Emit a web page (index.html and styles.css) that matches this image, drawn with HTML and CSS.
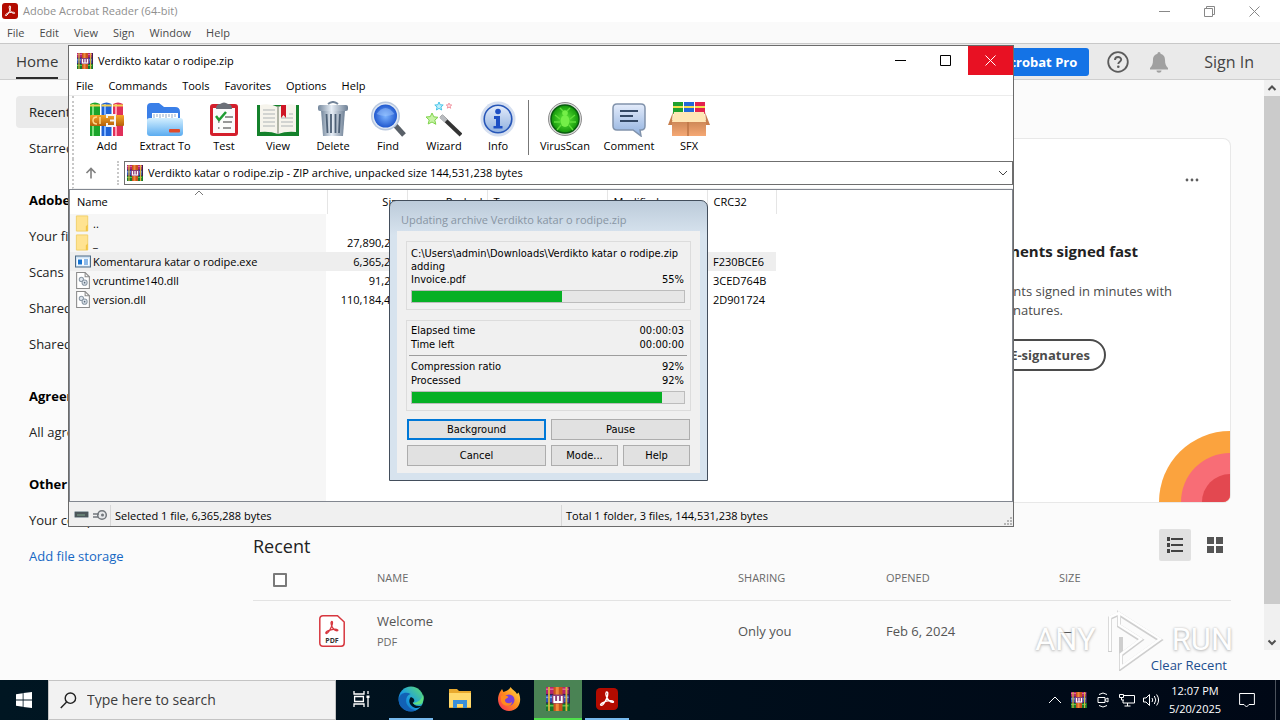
FILE: index.html
```html
<!DOCTYPE html>
<html lang="en">
<head>
<meta charset="utf-8">
<title>Adobe Acrobat Reader (64-bit)</title>
<link rel="stylesheet" href="styles.css">
</head>
<body>
<svg class="defs" aria-hidden="true">
  <symbol id="rar" viewBox="0 0 16 16" stroke="none">
    <rect width="16" height="16" fill="#3b1f4d"/>
    <rect x="0" y="0" width="15" height="4.6" fill="#b3256f"/><rect x="0" y="1" width="15" height="1" fill="#e0669b"/>
    <rect x="0" y="5.4" width="15" height="4.8" fill="#2e55b5"/><rect x="0" y="6.4" width="15" height="1" fill="#7f9fe8"/>
    <rect x="0" y="11" width="16" height="5" fill="#157a2c"/><rect x="0" y="12" width="15" height="1" fill="#58c04e"/>
    <rect x="1.4" y="0" width="1.2" height="16" fill="#d9b23c"/><rect x="13" y="0" width="1.2" height="16" fill="#d9b23c"/>
    <rect x="5" y="0" width="6" height="16" fill="#c9541c"/><rect x="6.5" y="0" width="2" height="16" fill="#f08a3c"/>
    <rect x="4" y="5" width="8" height="6" rx="1" fill="#8c3f78"/>
    <path d="M5.5 6v4h5V6M8 6v4" fill="none" stroke="#fff" stroke-width="1.2"/>
  </symbol>
  <symbol id="acro" viewBox="0 0 24 24">
    <rect width="24" height="24" rx="4.5" fill="#b30b00"/>
    <path d="M11.2 4.5c2.4-1.2 1.8 3.400.7 6.200C10.500 14 8 18.800 6 19c-2.200 0-.6-2.400 2.600-3.700 3.400-1.500 9-2.200 10.300-.7 1 1.600-2.300 1.500-4.500-.6-2.800-2.700-4.600-7.800-3.200-9.500z" fill="none" stroke="#fff" stroke-width="1.500"/>
  </symbol>
  <symbol id="folder" viewBox="0 0 16 18">
    <path d="M1 1h12v16H1z" fill="#ffe391"/><path d="M1 1h12v16H1z" fill="none" stroke="#f0cf69"/><path d="M11 12l2-2v7h-2z" fill="#f2c544"/>
  </symbol>
  <symbol id="dll" viewBox="0 0 14 16">
    <path d="M1 .5h8l4 4v11H1z" fill="#fff" stroke="#8b8b8b"/><path d="M9 .5v4h4" fill="none" stroke="#8b8b8b"/>
    <circle cx="5.500" cy="7" r="2" fill="#dfe6ee" stroke="#8d9aa7"/><circle cx="8.500" cy="10" r="2.400" fill="#dfe6ee" stroke="#8d9aa7"/><circle cx="8.500" cy="10" r=".8" fill="#5c6c7c"/>
  </symbol>
  <linearGradient id="gGlass" x1="0" y1="0" x2="0" y2="1"><stop offset="0" stop-color="#e4ecfb"/><stop offset="1" stop-color="#8fb0de"/></linearGradient>
  <linearGradient id="gFold" x1="0" y1="0" x2="0" y2="1"><stop offset="0" stop-color="#d3efff"/><stop offset="1" stop-color="#5bacf0"/></linearGradient>
  <linearGradient id="gMetal" x1="0" y1="0" x2="1" y2="0"><stop offset="0" stop-color="#74879c"/><stop offset=".45" stop-color="#e7eef6"/><stop offset="1" stop-color="#6d7f94"/></linearGradient>
  <linearGradient id="gGold" x1="0" y1="0" x2="0" y2="1"><stop offset="0" stop-color="#f6a62a"/><stop offset="1" stop-color="#b55f09"/></linearGradient>
  <linearGradient id="gBox" x1="0" y1="0" x2="0" y2="1"><stop offset="0" stop-color="#c98454"/><stop offset="1" stop-color="#f5a874"/></linearGradient>
  <radialGradient id="gLens"><stop offset="0" stop-color="#7db4ff"/><stop offset="1" stop-color="#2159cf"/></radialGradient>
  <radialGradient id="gVirus"><stop offset="0" stop-color="#64ee3c"/><stop offset="1" stop-color="#129509"/></radialGradient>
  <linearGradient id="gEdge" x1="0" y1="1" x2="1" y2="0"><stop offset="0" stop-color="#0c59a4"/><stop offset=".45" stop-color="#1b9de2"/><stop offset="1" stop-color="#62e06a"/></linearGradient>
  <linearGradient id="gFox" x1="1" y1="0" x2="0" y2="1"><stop offset="0" stop-color="#ffe14a"/><stop offset=".5" stop-color="#ff8a1e"/><stop offset="1" stop-color="#f5245f"/></linearGradient>
</svg>

<div class="desktop">
  <div class="acrobat">
    <header class="titlebar">
      <svg class="app-icon"><use href="#acro"/></svg>
      <span class="title">Adobe Acrobat Reader (64-bit)</span>
      <div class="win-buttons">
        <button aria-label="Minimize"><svg viewBox="0 0 11 11"><path d="M0 5.500h11" /></svg></button>
        <button aria-label="Restore"><svg viewBox="0 0 11 11"><path d="M.5 2.500h8v8h-8zM2.500 2.500v-2h8v8h-2"/></svg></button>
        <button aria-label="Close"><svg viewBox="0 0 11 11"><path d="M.5.5l10 10M10.500.5l-10 10"/></svg></button>
      </div>
    </header>
    <nav class="menubar">
      <button>File</button><button>Edit</button><button>View</button><button>Sign</button><button>Window</button><button>Help</button>
    </nav>
    <div class="toolbar">
      <button class="tab">Home</button>
      <div class="toolbar-right">
        <button class="try">Try Acrobat Pro</button>
        <button class="icon-btn" aria-label="Help"><svg class="i22" viewBox="0 0 22 22"><circle cx="11" cy="11" r="9.800" fill="none" stroke="#5c5c5c" stroke-width="1.800"/><path d="M8 9c0-4 6.200-3.800 6.200-.4 0 2.200-2.900 2.200-2.900 4.400" fill="none" stroke="#5c5c5c" stroke-width="1.900"/><circle cx="11.300" cy="15.800" r="1.300" fill="#5c5c5c"/></svg></button>
        <button class="icon-btn" aria-label="Notifications"><svg class="i20" viewBox="0 0 20 22"><path d="M10 1c1 0 1.500.8 1.500 1.700C15 3.600 16 6.300 16 9c0 4.200 1 6 3 8v1.500H1V17c2-2 3-3.800 3-8 0-2.700 1-5.400 4.500-6.300C8.500 1.800 9 1 10 1zM7.500 19.500h5c0 3-5 3-5 0z" fill="#a0a0a0"/></svg></button>
        <button class="signin">Sign In</button>
      </div>
    </div>
    <div class="body">
      <nav class="side">
        <a href="#" class="on">Recent</a><a href="#">Starred</a>
        <h3>Adobe cloud storage</h3>
        <a href="#">Your files</a><a href="#">Scans</a><a href="#">Shared by you</a><a href="#">Shared by others</a>
        <h3>Agreements</h3>
        <a href="#">All agreements</a>
        <h3>Other file storage</h3>
        <a href="#">Your computer</a><a href="#" class="link">Add file storage</a>
      </nav>
      <div class="pane">
        <div class="scroller">
          <main class="content">
            <section class="card">
              <button class="more" aria-label="More"><svg viewBox="0 0 20 20" fill="#5f5f5f"><circle cx="5" cy="10" r="1.400"/><circle cx="10" cy="10" r="1.400"/><circle cx="15" cy="10" r="1.400"/></svg></button>
              <h2>Get documents signed fast</h2>
              <p class="l1">Get your documents signed in minutes with</p>
              <p class="l2">secure e-signatures.</p>
              <button class="esign">Request E-signatures</button>
              <svg class="arc" viewBox="0 0 71 71"><circle cx="71" cy="71" r="71" fill="#fba33e"/><circle cx="71" cy="71" r="49" fill="#f86d76"/><circle cx="71" cy="71" r="28" fill="#e34850"/></svg>
            </section>
            <div class="recent-head">
              <h2>Recent</h2>
              <button class="view on" aria-label="List view"><svg viewBox="0 0 18 18" fill="#444"><path d="M1 1h3v4H1zM5 2h12v2H5zM1 7h3v4H1zM5 8h12v2H5zM1 13h3v4H1zM5 14h12v2H5z"/></svg></button>
              <button class="view" aria-label="Grid view"><svg viewBox="0 0 18 18" fill="#555"><path d="M1 1h7v7H1zM10 1h7v7h-7zM1 10h7v7H1zM10 10h7v7h-7z"/></svg></button>
            </div>
            <table class="recent">
              <colgroup><col class="c1"><col class="c2"><col class="c3"><col class="c4"><col class="c5"><col></colgroup>
              <thead><tr><th><input type="checkbox" aria-label="Select all"></th><th></th><th>NAME</th><th>SHARING</th><th>OPENED</th><th>SIZE</th></tr></thead>
              <tbody><tr><td></td>
                <td><svg class="pdf" viewBox="0 0 26 32"><path d="M4 .8h14.500l6.700 6.200v21q0 3.200-3 3.200H4q-3.200 0-3.200-3.200V4Q.8.8 4 .8z" fill="#fff" stroke="#d7373f" stroke-width="1.500"/><path d="M12.500 6.500c1.600-.7 1 3-.1 5.300-1.300 3-3.400 6.500-5 6.700-1.500-.4 0-2 2-2.800 3-1.200 7.700-2 9.300-.7.800 1-1.700 1.400-3.700-.5-2.300-2.200-3.800-6.800-2.500-8z" fill="none" stroke="#d7373f" stroke-width="1.300"/><text x="13" y="27.500" text-anchor="middle">PDF</text></svg></td>
                <td><div class="doc">Welcome</div><div class="kind">PDF</div></td><td>Only you</td><td>Feb 6, 2024</td><td>—</td></tr></tbody>
            </table>
          </main>
          <div class="scrollbar">
            <button aria-label="Scroll up"><svg viewBox="0 0 16 16"><path d="M4.500 10L8 6.500l3.500 3.500"/></svg></button>
            <div class="thumb"></div>
            <button aria-label="Scroll down"><svg viewBox="0 0 16 16"><path d="M4.500 6.500L8 10l3.500-3.500"/></svg></button>
          </div>
        </div>
        <footer class="foot"><a href="#">Clear Recent</a></footer>
      </div>
    </div>
  </div>

  <footer class="taskbar">
    <button class="start" aria-label="Start"><svg viewBox="0 0 16 16" fill="#fff"><path d="M0 2.200L6.700 1.200v6.400H0zM7.500 1.100L16 0v7.600H7.500zM0 8.400h6.700v6.400L0 13.800zM7.500 8.400H16V16l-8.500-1.100z"/></svg></button>
    <label class="search"><svg viewBox="0 0 18 18"><circle cx="11" cy="6.500" r="5.500"/><path d="M7 10.500L.8 17"/></svg><input type="text" placeholder="Type here to search" aria-label="Search"></label>
    <div class="tasks">
      <button class="task" aria-label="Task view"><svg class="i18" viewBox="0 0 18 18" fill="none" stroke="#fff" stroke-width="1.300"><path d="M1 1v3h10V1M1 17v-3h10v3M1.600 6.500h8.800v5H1.600zM15 1v3M15 8v9"/><path d="M13.500 5.500h3v2.500h-3z" fill="#fff" stroke="none"/></svg></button>
      <button class="task run" aria-label="Edge"><svg class="i26" viewBox="0 0 26 26"><circle cx="13" cy="13" r="12.500" fill="url(#gEdge)"/><path d="M.7 13C2 7 8 5.500 12.500 8c-4.500 1.500-6 8-2.500 12 2 2.500 5 4 8 4.200C9 28 .2 22 .7 13z" fill="#1261b5"/><path d="M13 11c-3 2.500-2 8.500 3 10.500 3 1.200 6.500.2 8-2-5 1.700-8.500-.5-9-3 2-1 2-4-2-5.500z" fill="#001622"/><path d="M14.500 16.800c1.500 2.200 5.500 2.700 9.500.7 2-4 2-7 1-9-1 5.500-6 8.500-10.500 8.300z" fill="#5cdf83"/></svg></button>
      <button class="task" aria-label="File Explorer"><svg class="i22" viewBox="0 0 22 20"><path d="M0 0h8l2 2h12v17H0z" fill="#e8a92e"/><path d="M0 4h22v14H0z" fill="#ffd96c"/><path d="M4 19v-8h14v8h-4v-4H8v4z" fill="#3b8fd8"/></svg></button>
      <button class="task" aria-label="Firefox"><svg class="i24" viewBox="0 0 24 24"><path d="M3 5l2-3 1.500 3L9 4c2-1 3.500-1.500 4.500-4 2 3 5 4 6.500 7l1.500-1.500C26 15 21 24 12 24 3 24-2 14 3 5z" fill="url(#gFox)"/><circle cx="12" cy="13" r="5.500" fill="#7a3fd6"/><path d="M4 9c3-1.500 5-.5 7 .5 1 2-3 1.500-3 4s4 4 7 1.500c0 5-9 5.500-11-1z" fill="#ff8a1e"/></svg></button>
      <button class="task active" aria-label="WinRAR"><svg class="i24"><use href="#rar"/></svg></button>
      <button class="task run" aria-label="Acrobat"><svg class="i22"><use href="#acro"/></svg></button>
    </div>
    <div class="tray">
      <button aria-label="Show hidden icons"><svg class="i16" viewBox="0 0 16 16"><path d="M2 11l6-6 6 6"/></svg></button>
      <button aria-label="WinRAR"><svg class="i16"><use href="#rar"/></svg></button>
      <button aria-label="Meet now"><svg class="i16" viewBox="0 0 16 16"><path d="M3 5.500h7v5H3zM10 7.500l3-1.500v4l-3-1.500M4 2.500q4-3 8 0M4 13.500q4 3 8 0"/></svg></button>
      <button aria-label="Network"><svg class="i16" viewBox="0 0 16 16"><path d="M5 3.500h10.500v7.500H4V8M8.500 11v3M5.500 14h6M.5 2.500h4v3h-4zM2.500 5.500V8H5"/></svg></button>
      <button aria-label="Volume"><svg class="i16" viewBox="0 0 16 16"><path d="M.5 6h2.500l3.500-3.500v11L3 10H.5zM9 6q1.500 2 0 4M11.300 4q3 4 0 8M13.600 2.500q4 5.500 0 11"/></svg></button>
      <time class="clock"><span>12:07 PM</span><span>5/20/2025</span></time>
      <button class="notif" aria-label="Notifications"><svg class="i16" viewBox="0 0 16 16"><path d="M.6 1.500h14.800v11H10L7.500 15 5 12.500H.6z"/></svg></button>
    </div>
  </footer>

  <div class="watermark" aria-hidden="true"><span>ANY</span><svg viewBox="0 0 60 62"><path d="M15 5l41 26-39 28V46l20-15L15 17zM15 5L6 9v34M17 46V28" fill="none" stroke="#c4c4c4" stroke-width="4"/><path d="M15 4l41 26-39 28V45l20-15L15 16zM15 4L6 8v34" fill="none" stroke="#fff" stroke-width="2.500"/></svg><span>RUN</span></div>

  <section class="winrar">
    <header class="wr-title">
      <svg class="i16"><use href="#rar"/></svg><h1>Verdikto katar o rodipe.zip</h1>
      <div class="win-buttons">
        <button aria-label="Minimize"><svg viewBox="0 0 11 11"><path d="M0 5.500h11"/></svg></button>
        <button aria-label="Maximize"><svg viewBox="0 0 11 11"><path d="M.5.5h10v10H.5z"/></svg></button>
        <button class="close" aria-label="Close"><svg viewBox="0 0 11 11"><path d="M.5.5l10 10M10.500.5l-10 10"/></svg></button>
      </div>
    </header>
    <nav class="wr-menu"><button>File</button><button>Commands</button><button>Tools</button><button>Favorites</button><button>Options</button><button>Help</button></nav>
    <div class="wr-tools">
      <button class="w52"><svg viewBox="0 0 36 36"><path d="M1 3q5-3 10 0v32H1z" fill="#1ba52c"/><path d="M12.500 3q5-3 10 0v32h-10z" fill="#1f62d6"/><path d="M24 3q5-3 10 0v32H24z" fill="#e0305a"/><path d="M3 3h2v32H3z" fill="#7fe07e"/><path d="M15 3h2v32h-2z" fill="#7db2ff"/><path d="M26 3h2v32h-2z" fill="#ff9ab4"/><path d="M1 3.500h10v2H1zM12.500 3.500h10v2h-10zM24 3.500h10v2H24z" fill="#f4d04e"/><rect x="1" y="14" width="34" height="11" rx="1" fill="url(#gGold)"/><path d="M8 16q-4 0-4 3.500T8 23M11 16v7" fill="none" stroke="#ffd98a" stroke-width="1.500"/><path d="M18 17v-3h8v11h-8v-3M21 19.500h6" fill="none" stroke="#f4f4f4" stroke-width="2"/></svg>Add</button>
      <button class="w64"><svg viewBox="0 0 36 36"><path d="M0 6q0-4 4-4h8l5 4h11q5 0 5 5v18H0z" fill="#3a7fe8"/><path d="M5 12h26v8H5z" fill="#fff"/><path d="M7 13v4M10 13v3M13 13v4M16 13v3M19 13v4M22 13v3M25 13v4M28 13v3" stroke="#8fa9c9"/><path d="M0 19q0-2 3-2h30q3 0 3 3v12q0 3-3 3H3q-3 0-3-3z" fill="url(#gFold)"/><rect x="22" y="28" width="11" height="3.500" rx="1" fill="#e04a2a"/></svg>Extract To</button>
      <button class="w54"><svg viewBox="0 0 36 36"><rect x="4" y="3" width="28" height="32" rx="3" fill="#d41f2c"/><path d="M7 7h22v25H7z" fill="#fbfbfb"/><path d="M10 8q0-5 4-5 4-3 8 0 4 0 4 5z" fill="#6c7078"/><path d="M10 15l3 4 7-8" fill="none" stroke="#1f9c33" stroke-width="2.500"/><path d="M19 16h8M12 21h1.500M17 21h9M12 27h1.500M17 27h8" stroke="#777" stroke-width="1.500"/></svg>Test</button>
      <button class="w54"><svg class="wide" viewBox="0 0 42 36"><path d="M0 4h42v31H0z" fill="#14812b"/><path d="M3 4q10-2 18 2 8-4 18-2v27q-10-1-18 2-8-3-18-2z" fill="#f6f4ec"/><path d="M6 9h12M6 13h12M6 17h12M6 21h12M6 25h12M24 21h12M24 17h12M24 25h12M32 13h4" stroke="#aeb3b5" stroke-width="1.200"/><path d="M21 5v28" stroke="#9aa090" stroke-width="1.500"/><path d="M24 4h5v13l-2.500-3-2.500 3z" fill="#cf1626"/></svg>View</button>
      <button class="w56"><svg viewBox="0 0 36 36"><path d="M13 3q5-4 10 0" fill="none" stroke="#73859a" stroke-width="2"/><path d="M6 9h24l-2 26H8z" fill="url(#gMetal)"/><rect x="3" y="4" width="30" height="6" rx="2" fill="url(#gMetal)"/><path d="M11.500 13l1 19M16 13v19M20.500 13v19M25 13l-1 19" stroke="#4d6076" stroke-width="1.800"/></svg>Delete</button>
      <button class="w54"><svg viewBox="0 0 36 36"><path d="M25 24l9 10" stroke="#596068" stroke-width="5"/><circle cx="15.500" cy="15" r="14.500" fill="#b9c8de"/><circle cx="15.500" cy="15" r="13" fill="#dfe8f4"/><circle cx="15.500" cy="15" r="11.500" fill="url(#gLens)"/><path d="M6.500 13q9-12 18 0-9 4-18 0z" fill="#a6ccff" opacity=".45"/></svg>Find</button>
      <button class="w58"><svg viewBox="0 0 36 36"><path d="M15 15l20 19" stroke="#343434" stroke-width="4"/><path d="M15 15l5 5" stroke="#b9bcc0" stroke-width="4"/><path d="M6 12l1.800 3.800 4.200.5-3.200 2.800 1 4.200L6 21l-3.800 2 1-4L0 16l4.300-.4z" fill="#c7f3a5" stroke="#7fd34c"/><path d="M13 1l1.200 2.800 3 .2-2.300 2 .8 3-2.700-1.600L10.400 9l.7-3L8.800 4l3-.2z" fill="#bdeffc" stroke="#48c4e8"/><path d="M23 2l.8 1.800 2 .2-1.600 1.300.5 2L23 6.200l-1.700 1 .5-2L20.200 4l2-.2z" fill="#ffe0e4" stroke="#ef8895" stroke-width=".8"/></svg>Wizard</button>
      <button class="w50"><svg viewBox="0 0 36 36"><circle cx="18" cy="18" r="17.500" fill="#d5dff0"/><circle cx="18" cy="18" r="13.800" fill="url(#gGlass)" stroke="#2656b8" stroke-width="1.600"/><circle cx="18" cy="10.500" r="2.800" fill="#1d4fc4"/><path d="M14 15h6v10h2.500v2.500h-9V25H16v-7h-2z" fill="#1d4fc4"/></svg>Info</button>
      <span class="wr-sep"></span>
      <button class="w64"><svg viewBox="0 0 36 36"><circle cx="18" cy="18" r="16.500" fill="#dcdcdc" stroke="#8e8e8e"/><circle cx="18" cy="18" r="14" fill="url(#gVirus)" stroke="#0a5c10" stroke-width="1.500"/><ellipse cx="18" cy="20" rx="4.500" ry="6" fill="#74ee48"/><circle cx="18" cy="12" r="2.800" fill="#74ee48"/><path d="M13 18L8 14M13 21H7M14 24l-4 5M23 18l5-4M23 21h6M22 24l4 5M16 10l-3-3M20 10l3-3" stroke="#60dd3c" stroke-width="1.400"/></svg>VirusScan</button>
      <button class="w64"><svg viewBox="0 0 36 36"><path d="M6 3h24q4 0 4 4v18q0 4-4 4h-1l1 6-8-6H6q-4 0-4-4V7q0-4 4-4z" fill="url(#gGlass)" stroke="#8193ac" stroke-width="1.500"/><path d="M9 10h18M9 15h13M9 20h18" stroke="#344966" stroke-width="1.800"/></svg>Comment</button>
      <button class="w56"><svg class="wide" viewBox="0 0 42 36"><path d="M5 1h10v12H5z" fill="#20a22f"/><path d="M16 1h10v12H16z" fill="#2368d7"/><path d="M27 1h10v12H27z" fill="#e3224e"/><path d="M5 5h10v2H5zM16 5h10v2H16zM27 5h10v2H27z" fill="#f4e04e"/><path d="M4 19h34v16H4z" fill="url(#gBox)"/><path d="M6 11h30l2 10H4z" fill="#ffe6b5"/><path d="M5 11L0 24h4v-4zM37 11l5 13h-4v-4z" fill="#c77f4e"/><path d="M20 21v14" stroke="#bd7444" stroke-width="1.500"/></svg>SFX</button>
    </div>
    <div class="wr-address">
      <button class="up" aria-label="Up one level"><svg viewBox="0 0 12 12"><path d="M6 11.500V2M1.500 6L6 1.500 10.500 6"/></svg></button>
      <div class="combo">
        <svg class="i16"><use href="#rar"/></svg>
        <select aria-label="Archive path"><option>Verdikto katar o rodipe.zip - ZIP archive, unpacked size 144,531,238 bytes</option></select>
        <svg class="chev" viewBox="0 0 10 10"><path d="M1 3l4 4 4-4"/></svg>
      </div>
    </div>
    <div class="wr-list">
      <table class="files">
        <colgroup><col class="f1"><col class="f2"><col class="f2"><col class="f4"><col class="f5"><col class="f6"></colgroup>
        <thead><tr><th>Name<svg class="sort" viewBox="0 0 10 6"><path d="M1 5l4-4 4 4"/></svg></th><th class="r">Size</th><th class="r">Packed</th><th>Type</th><th>Modified</th><th>CRC32</th></tr></thead>
        <tbody>
          <tr><td><svg class="fi"><use href="#folder"/></svg>..</td><td></td><td></td><td></td><td></td><td></td></tr>
          <tr><td><svg class="fi"><use href="#folder"/></svg>_</td><td class="r">27,890,240</td><td></td><td></td><td></td><td></td></tr>
          <tr class="sel"><td><svg class="fi" viewBox="0 0 16 14"><rect x=".5" y="1.500" width="15" height="11" fill="#cfe3f5" stroke="#4d6a86"/><rect x="2" y="4" width="12" height="7" fill="#fff"/><path d="M3 5h4v5H3z" fill="#1673d1"/><path d="M9 5.500h4M9 7.500h4M9 9.500h4" stroke="#1673d1"/></svg>Komentarura katar o rodipe.exe</td><td class="r">6,365,288</td><td></td><td></td><td></td><td>F230BCE6</td></tr>
          <tr><td><svg class="fi"><use href="#dll"/></svg>vcruntime140.dll</td><td class="r">91,232</td><td></td><td></td><td></td><td>3CED764B</td></tr>
          <tr><td><svg class="fi"><use href="#dll"/></svg>version.dll</td><td class="r">110,184,478</td><td></td><td></td><td></td><td>2D901724</td></tr>
        </tbody>
      </table>
    </div>
    <footer class="wr-status">
      <div class="st-icons"><svg viewBox="0 0 34 12"><rect x=".5" y="2.500" width="14" height="6" rx="1" fill="#4c565a" stroke="#a2aeb4"/><path d="M3 6h8" stroke="#7fa58c"/><circle cx="28" cy="6" r="4.300" fill="#e6e8ea" stroke="#72777c" stroke-width="1.500"/><circle cx="28.500" cy="6" r="1.500" fill="#72777c"/><path d="M19 5h6M19 8h5" stroke="#72777c" stroke-width="1.500"/></svg></div>
      <span class="st1">Selected 1 file, 6,365,288 bytes</span>
      <span class="st2">Total 1 folder, 3 files, 144,531,238 bytes</span>
      <svg class="grip" viewBox="0 0 10 10" fill="#b5b5b5"><path d="M7 1h2v2H7zM7 4h2v2H7zM7 7h2v2H7zM4 4h2v2H4zM4 7h2v2H4zM1 7h2v2H1z"/></svg>
    </footer>
  </section>

  <section class="dialog">
    <h2>Updating archive Verdikto katar o rodipe.zip</h2>
    <div class="dlg-body">
      <div class="group">
        <div>C:\Users\admin\Downloads\Verdikto katar o rodipe.zip</div>
        <div>adding</div>
        <div class="pair"><span id="pf">Invoice.pdf</span><span>55%</span></div>
        <progress aria-labelledby="pf" value="55" max="100"></progress>
      </div>
      <div class="group second">
        <div class="pair"><span>Elapsed time</span><span>00:00:03</span></div>
        <div class="pair"><span>Time left</span><span>00:00:00</span></div>
        <hr>
        <div class="pair"><span>Compression ratio</span><span>92%</span></div>
        <div class="pair"><span id="pp">Processed</span><span>92%</span></div>
        <progress aria-labelledby="pp" value="92" max="100"></progress>
      </div>
      <div class="actions">
        <button class="default">Background</button><button class="half">Pause</button>
        <button class="two">Cancel</button><button>Mode...</button><button>Help</button>
      </div>
    </div>
  </section>
</div>
</body>
</html>
```
FILE: styles.css
```css
* { box-sizing: border-box; }
body { margin: 0; font: 12px/16px "Open Sans", "Noto Sans", sans-serif; color: #222; }
button, input, select { font: inherit; color: inherit; margin: 0; padding: 0; border: 0; background: none; }
h1, h2, h3, p { margin: 0; font-weight: 400; }
a { color: inherit; text-decoration: none; }
table { border-collapse: collapse; table-layout: fixed; }
th, td { padding: 0; font-weight: 400; text-align: left; }
svg { display: block; flex: none; }
.defs { position: absolute; width: 0; height: 0; }
.i16 { width: 16px; height: 16px; }
.i18 { width: 18px; height: 18px; }
.i20 { width: 20px; height: 22px; }
.i22 { width: 22px; height: 22px; }
.i24 { width: 24px; height: 24px; }
.i26 { width: 26px; height: 26px; }

.desktop { position: relative; height: 100vh; display: flex; flex-direction: column; overflow: hidden; }

/* Acrobat window */
.acrobat { flex: 1; min-height: 0; display: flex; flex-direction: column; background: #fbfbfb; }
.titlebar { display: flex; align-items: center; height: 22px; background: #fff; padding-left: 2px; }
.titlebar .app-icon { width: 16px; height: 16px; }
.titlebar .title { margin-left: 5px; flex: 1; color: #8f8f8f; font-size: 11px; }
.win-buttons { display: flex; align-self: stretch; }
.win-buttons button { width: 45px; display: grid; place-items: center; }
.win-buttons svg { width: 11px; height: 11px; fill: none; stroke: #888; }
.titlebar .win-buttons { padding-right: 3px; }
.menubar { display: flex; gap: 15px; padding: 0 7px; height: 21px; background: #fafafa; color: #4a4a4a; font-size: 11px; }
.toolbar { display: flex; justify-content: space-between; height: 37px; background: #eaeaea; border-top: 1px solid #c8c8c8; border-bottom: 1px solid #cfcfcf; padding: 0 26px 0 16px; color: #444; }
.tab { font-size: 15px; border-bottom: 2px solid #2c2c2c; color: #3a3a3a; }
.toolbar-right { display: flex; align-items: center; }
.try { height: 28px; padding: 0 12px; border-radius: 3px; background: #1473e6; color: #fff; font-size: 13px; font-weight: 700; }
.icon-btn { margin-left: 18px; }
.icon-btn + .icon-btn { margin-left: 20px; }
.signin { margin-left: 35px; font-size: 16px; }
.body { flex: 1; min-height: 0; display: flex; }
.side { width: 253px; flex: none; padding: 16px; display: flex; flex-direction: column; font-size: 13px; }
.side a, .side h3 { line-height: 32px; margin-bottom: 4px; padding-left: 13px; border-radius: 4px; font-size: 13px; }
.side h3 { margin-top: 16px; font-weight: 700; color: #000; }
.side .on { background: #eaeaea; }
.side .link { color: #1668c4; }
.pane { flex: 1; min-width: 0; display: flex; flex-direction: column; }
.scroller { flex: 1; min-height: 0; display: flex; overflow: hidden; }
.content { flex: 1; min-width: 0; padding: 58px 33px 0 0; }
.card { display: flex; flex-direction: column; align-items: flex-end; padding-top: 31px; background: #fff; border: 1px solid #e8e8e8; border-width: 1px 1px 1px 0; border-radius: 8px; overflow: hidden; }
.more { margin-right: 28px; }
.more svg { width: 20px; height: 20px; }
.card h2 { margin: 50px 92px 20px 0; font-size: 15px; line-height: 22px; font-weight: 700; }
.card p { font-size: 13px; line-height: 19px; color: #4b4b4b; }
.card .l1 { margin-right: 58px; }
.card .l2 { margin-right: 167px; }
.esign { margin: 19px 124px 60px 0; height: 32px; padding: 0 14px; border: 2px solid #4b4b4b; border-radius: 16px; background: #fff; font-size: 13px; font-weight: 700; color: #4b4b4b; }
.arc { width: 71px; height: 71px; }
.recent-head { display: flex; align-items: center; gap: 8px; margin-top: 26px; }
.recent-head h2 { flex: 1; padding-top: 2px; font-size: 18px; line-height: 24px; }
.view { width: 32px; height: 32px; border-radius: 2px; display: grid; place-items: center; }
.view.on { background: #e1e1e1; }
.view svg { width: 18px; height: 18px; }
.recent { width: 100%; color: #555; font-size: 13px; }
.recent thead tr { height: 39px; border-bottom: 1px solid #e3e3e3; }
.recent th { font-size: 11px; color: #6a6a6a; padding-bottom: 4px; }
.recent tbody tr { height: 62px; }
.recent .c1 { width: 66px; }
.recent .c2 { width: 58px; }
.recent .c3 { width: 361px; }
.recent .c4 { width: 148px; }
.recent .c5 { width: 173px; }
.recent input { appearance: none; display: block; width: 14px; height: 14px; margin-left: 20px; margin-top: 4px; border: 2px solid #7a7a7a; border-radius: 1px; background: #fff; }
.pdf { width: 26px; height: 32px; }
.pdf text { font: 700 7px "Open Sans", sans-serif; fill: #333; }
.doc { line-height: 22px; }
.kind { font-size: 11px; line-height: 20px; color: #6a6a6a; }
.scrollbar { width: 16px; display: flex; flex-direction: column; background: #f0f0f0; }
.scrollbar button { height: 16px; }
.scrollbar svg { width: 16px; height: 16px; fill: none; stroke: #505050; stroke-width: 2; }
.scrollbar .thumb { flex: 1; margin-bottom: 30px; background: #cbcbcb; }
.foot { height: 30px; display: flex; justify-content: flex-end; align-items: center; padding-right: 53px; }
.foot a { font-size: 13px; color: #1d4f8f; }

/* Taskbar */
.taskbar { display: flex; height: 40px; background: linear-gradient(90deg, #001622, #000816); color: #fff; }
.taskbar button { display: grid; place-items: center; }
.start { width: 48px; }
.start svg { width: 16px; height: 16px; }
.search { width: 288px; display: flex; align-items: center; gap: 10px; padding-left: 11px; background: #f2f2f2; border: 1px solid #c4c4c4; }
.search svg { width: 17px; height: 17px; fill: none; stroke: #222; stroke-width: 1.5; }
.search input { flex: 1; min-width: 0; outline: 0; font-size: 14px; color: #333; }
.search input::placeholder { color: #3c3c3c; opacity: 1; }
.tasks { flex: 1; display: flex; gap: 1px; padding-left: 2px; }
.task { width: 48px; border-bottom: 2px solid transparent; }
.task.run { border-image: linear-gradient(90deg, transparent 4px, #76b9ed 4px, #76b9ed 44px, transparent 44px) 2; }
.task.active { background: #4a8354; border-bottom-color: #4fe14b; }
.tray { display: flex; padding-right: 4px; }
.tray button { width: 24px; }
.tray svg { fill: none; stroke: #fff; }
.clock { width: 64px; display: flex; flex-direction: column; justify-content: center; text-align: center; font-size: 11px; line-height: 18px; }
.tray .notif { width: 49px; padding-right: 9px; border-right: 1px solid #4b525c; }

.watermark { position: absolute; right: 47px; bottom: 49px; display: flex; align-items: center; gap: 8px; font: 400 31px/40px Roboto, sans-serif; color: #fff; text-shadow: 0 1px 3px #aaa, 0 0 2px #bbb; opacity: .8; }
.watermark svg { width: 60px; height: 62px; }

/* WinRAR window */
.winrar { position: absolute; left: 68px; top: 45px; width: 946px; height: 482px; display: flex; flex-direction: column; background: #fff; border: 1px solid #6b6b6b; color: #000; font-size: 11px; }
.wr-title { display: flex; align-items: center; height: 29px; padding-left: 8px; }
.wr-title h1 { flex: 1; margin-left: 5px; font-size: 11px; }
.wr-title .win-buttons svg { stroke: #000; }
.wr-title .close { background: #e81123; }
.wr-title .win-buttons .close svg { stroke: #fff; }
.wr-menu { display: flex; gap: 15px; height: 21px; padding: 2px 7px 0; border-bottom: 1px solid #ececec; }
.wr-tools { display: flex; height: 63px; margin-left: 3px; padding-left: 7px; border-left: 2px dotted #c8c8c8; }
.wr-tools button { display: flex; flex-direction: column; align-items: center; padding-top: 5px; gap: 1px; }
.wr-tools svg { width: 36px; height: 36px; }
.wr-tools .wide { width: 42px; }
.w50 { width: 50px; }
.w52 { width: 52px; }
.w54 { width: 54px; }
.w56 { width: 56px; }
.w58 { width: 58px; }
.w64 { width: 64px; }
.wr-sep { width: 1px; margin: 4px 4px 4px 5px; background: #777; }
.wr-address { display: flex; height: 30px; margin-left: 3px; padding: 2px 0 3px; border-left: 2px dotted #c8c8c8; border-bottom: 1px solid #f0f0f0; }
.up { width: 45px; padding-left: 11px; border-right: 2px dotted #c8c8c8; }
.up svg { width: 12px; height: 12px; fill: none; stroke: #808080; stroke-width: 1.6; }
.combo { flex: 1; display: flex; align-items: center; margin-left: 5px; padding: 0 4px 0 2px; border: 1px solid #6f6f6f; }
.combo select { flex: 1; appearance: none; margin-left: 5px; }
.chev { width: 10px; height: 10px; fill: none; stroke: #444; }
.wr-list { flex: 1; min-height: 0; border: 1px solid #828790; background: linear-gradient(#f6f6f6, #f6f6f6) 0 24px / 256px 100% no-repeat; }
.files { width: 706px; }
.files .f1 { width: 257px; }
.files .f2 { width: 80px; }
.files .f4 { width: 120px; }
.files .f5 { width: 100px; }
.files .f6 { width: 69px; }
.files th { position: relative; height: 24px; padding-left: 6px; border-right: 1px solid #e5e5e5; }
.files th:first-child { padding-left: 7px; }
.files td { height: 19px; line-height: 19px; padding-left: 6px; }
.files td:first-child { display: flex; align-items: center; gap: 2px; padding-left: 5px; }
.files th.r, .files td.r { text-align: right; padding: 0 4px 0 0; }
.files .sel { background: #eee; }
.fi { width: 16px; height: 17px; }
.sort { position: absolute; left: 124px; top: 0; width: 10px; height: 6px; fill: none; stroke: #777; }
.wr-status { display: flex; align-items: center; height: 24px; padding-top: 3px; background: #f0f0f0; }
.st-icons { width: 42px; padding-left: 5px; border-right: 1px solid #d7d7d7; align-self: stretch; }
.st-icons svg { width: 34px; height: 20px; }
.st1 { width: 451px; padding-left: 4px; border-right: 1px solid #d7d7d7; line-height: 21px; }
.st2 { flex: 1; padding-left: 4px; line-height: 21px; }
.grip { width: 10px; height: 10px; align-self: flex-end; }

/* Progress dialog */
.dialog { position: absolute; left: 389px; top: 200px; width: 319px; padding: 0 7px 7px; border: 1px solid #434e5c; border-radius: 7px 7px 0 0; background: linear-gradient(#bccbda, #d7e3ee 34px); color: #000; font: 11px/14px "DejaVu Sans Condensed", Tahoma, sans-serif; }
.dialog h2 { height: 30px; padding-left: 4px; color: #8895a3; font: 11px/38px "Open Sans", sans-serif; }
.dlg-body { background: #f0f0f0; padding: 10px 9px 7px; }
.group { border: 1px solid #dcdcdc; padding: 5px 5px 6px 4px; line-height: 13px; height: 69px; }
.group.second { margin-top: 10px; padding-top: 3px; height: 91px; }
.pair { display: flex; justify-content: space-between; line-height: 14px; padding-right: 1px; }
.group hr { margin: 3px -2px 4px; border: 0; border-top: 1px solid #9d9d9d; }
progress { appearance: none; display: block; width: 100%; height: 13px; margin-top: 3px; border: 1px solid #bcbcbc; background: #e6e6e6; }
progress::-webkit-progress-bar { background: #e6e6e6; }
progress::-webkit-progress-value { background: #06b025; }
.actions { display: grid; grid-template-columns: 67px 67px 1fr 1fr; gap: 5px; margin: 8px 1px 0; }
.actions button { height: 21px; border: 1px solid #adadad; background: #e1e1e1; }
.actions .default { grid-column: span 2; border: 2px solid #0078d7; }
.actions .half, .actions .two { grid-column: span 2; }
```
